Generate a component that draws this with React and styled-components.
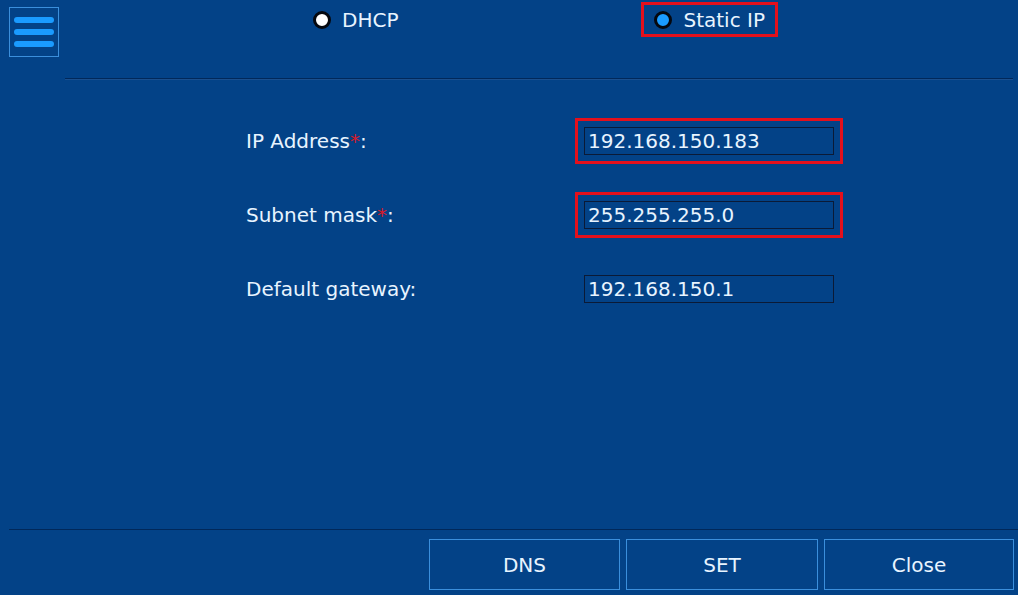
import styled, { createGlobalStyle } from "styled-components";

const GlobalStyle = createGlobalStyle`
	html, body {
		margin: 0;
		padding: 0;
		background: #034287;
	}
	body {
		font-family: "DejaVu Sans", "Liberation Sans", sans-serif;
		color: #e8f4ff;
	}
`;

const fields = [
	{ label: "IP Address", required: true, value: "192.168.150.183", highlight: true },
	{ label: "Subnet mask", required: true, value: "255.255.255.0", highlight: true },
	{ label: "Default gateway", required: false, value: "192.168.150.1", highlight: false },
];

const actions = [
	{ text: "DNS", width: 191 },
	{ text: "SET", width: 192 },
	{ text: "Close", width: 190 },
];

const App = () => {
	return (
		<Page>
			<GlobalStyle />
			<Header>
				<MenuButton aria-label="Menu">
					<Bar />
					<Bar />
					<Bar />
				</MenuButton>
				<Radios>
					<RadioOption>
						<RadioDot />
						DHCP
					</RadioOption>
					<RadioOption $outlined>
						<RadioDot $checked />
						Static IP
					</RadioOption>
				</Radios>
			</Header>
			<Divider />
			<Form>
				{fields.map((f) => (
					<Row key={f.label}>
						<Label>
							{f.label}
							{f.required && <Star>*</Star>}:
						</Label>
						<FieldFrame $highlight={f.highlight}>
							<Input defaultValue={f.value} />
						</FieldFrame>
					</Row>
				))}
			</Form>
			<Footer>
				{actions.map((a) => (
					<ActionButton key={a.text} $w={a.width}>
						{a.text}
					</ActionButton>
				))}
			</Footer>
		</Page>
	);
};

export default App;

const Page = styled.div`
	width: 1018px;
	height: 595px;
	display: flex;
	flex-direction: column;
	overflow: hidden;
`;

const Header = styled.div`
	height: 78px;
	display: flex;
	align-items: flex-start;
`;

const MenuButton = styled.button`
	box-sizing: border-box;
	width: 50px;
	height: 50px;
	margin: 7px 0 0 9px;
	padding: 0 4px;
	background: transparent;
	border: 1px solid #3b8fdc;
	display: flex;
	flex-direction: column;
	justify-content: center;
	gap: 6px;
	cursor: pointer;
`;

const Bar = styled.span`
	display: block;
	height: 6px;
	border-radius: 3px;
	background: #1a9bff;
`;

const Radios = styled.div`
	display: flex;
	align-items: center;
	gap: 230px;
	margin: 2px 0 0 241px;
	height: 35px;
`;

const RadioOption = styled.label`
	box-sizing: border-box;
	height: 35px;
	display: flex;
	align-items: center;
	gap: 11px;
	padding: 0 10px 0 10px;
	font-size: 20px;
	border: 3px solid ${(p) => (p.$outlined ? "#e4101c" : "transparent")};
	cursor: pointer;
`;

const RadioDot = styled.span`
	box-sizing: border-box;
	flex-shrink: 0;
	width: 18px;
	height: 18px;
	border-radius: 50%;
	border: 3px solid #05080f;
	background: ${(p) => (p.$checked ? "#1a9bff" : "#ffffff")};
`;

const Divider = styled.div`
	height: 0;
	margin: 0 5px 0 65px;
	border-top: 1px solid #01285a;
	border-bottom: 1px solid #1a4f8e;
`;

const Form = styled.div`
	flex: 1;
	display: flex;
	flex-direction: column;
	gap: 28px;
	padding: 38px 0 0 246px;
`;

const Row = styled.div`
	display: grid;
	grid-template-columns: 329px auto;
	align-items: center;
`;

const Label = styled.span`
	font-size: 20px;
`;

const Star = styled.span`
	color: #d81a2a;
`;

const FieldFrame = styled.div`
	width: fit-content;
	padding: 6px;
	border: 3px solid ${(p) => (p.$highlight ? "#e4101c" : "transparent")};
`;

const Input = styled.input`
	box-sizing: border-box;
	width: 250px;
	height: 28px;
	padding: 0 3px;
	background: transparent;
	border: 1px solid #0b1a36;
	color: #e8f4ff;
	font-family: "DejaVu Sans", "Liberation Sans", sans-serif;
	font-size: 20px;
	outline: none;
`;

const Footer = styled.div`
	margin-left: 9px;
	border-top: 1px solid #01285a;
	padding: 9px 4px 5px 0;
	display: flex;
	justify-content: flex-end;
	gap: 6px;
`;

const ActionButton = styled.button`
	width: ${(p) => p.$w}px;
	height: 51px;
	background: transparent;
	border: 1px solid #3b8fdc;
	color: #e8f4ff;
	font-family: "DejaVu Sans", "Liberation Sans", sans-serif;
	font-size: 20px;
	cursor: pointer;
	&:hover {
		background: #0a4d99;
	}
`;
